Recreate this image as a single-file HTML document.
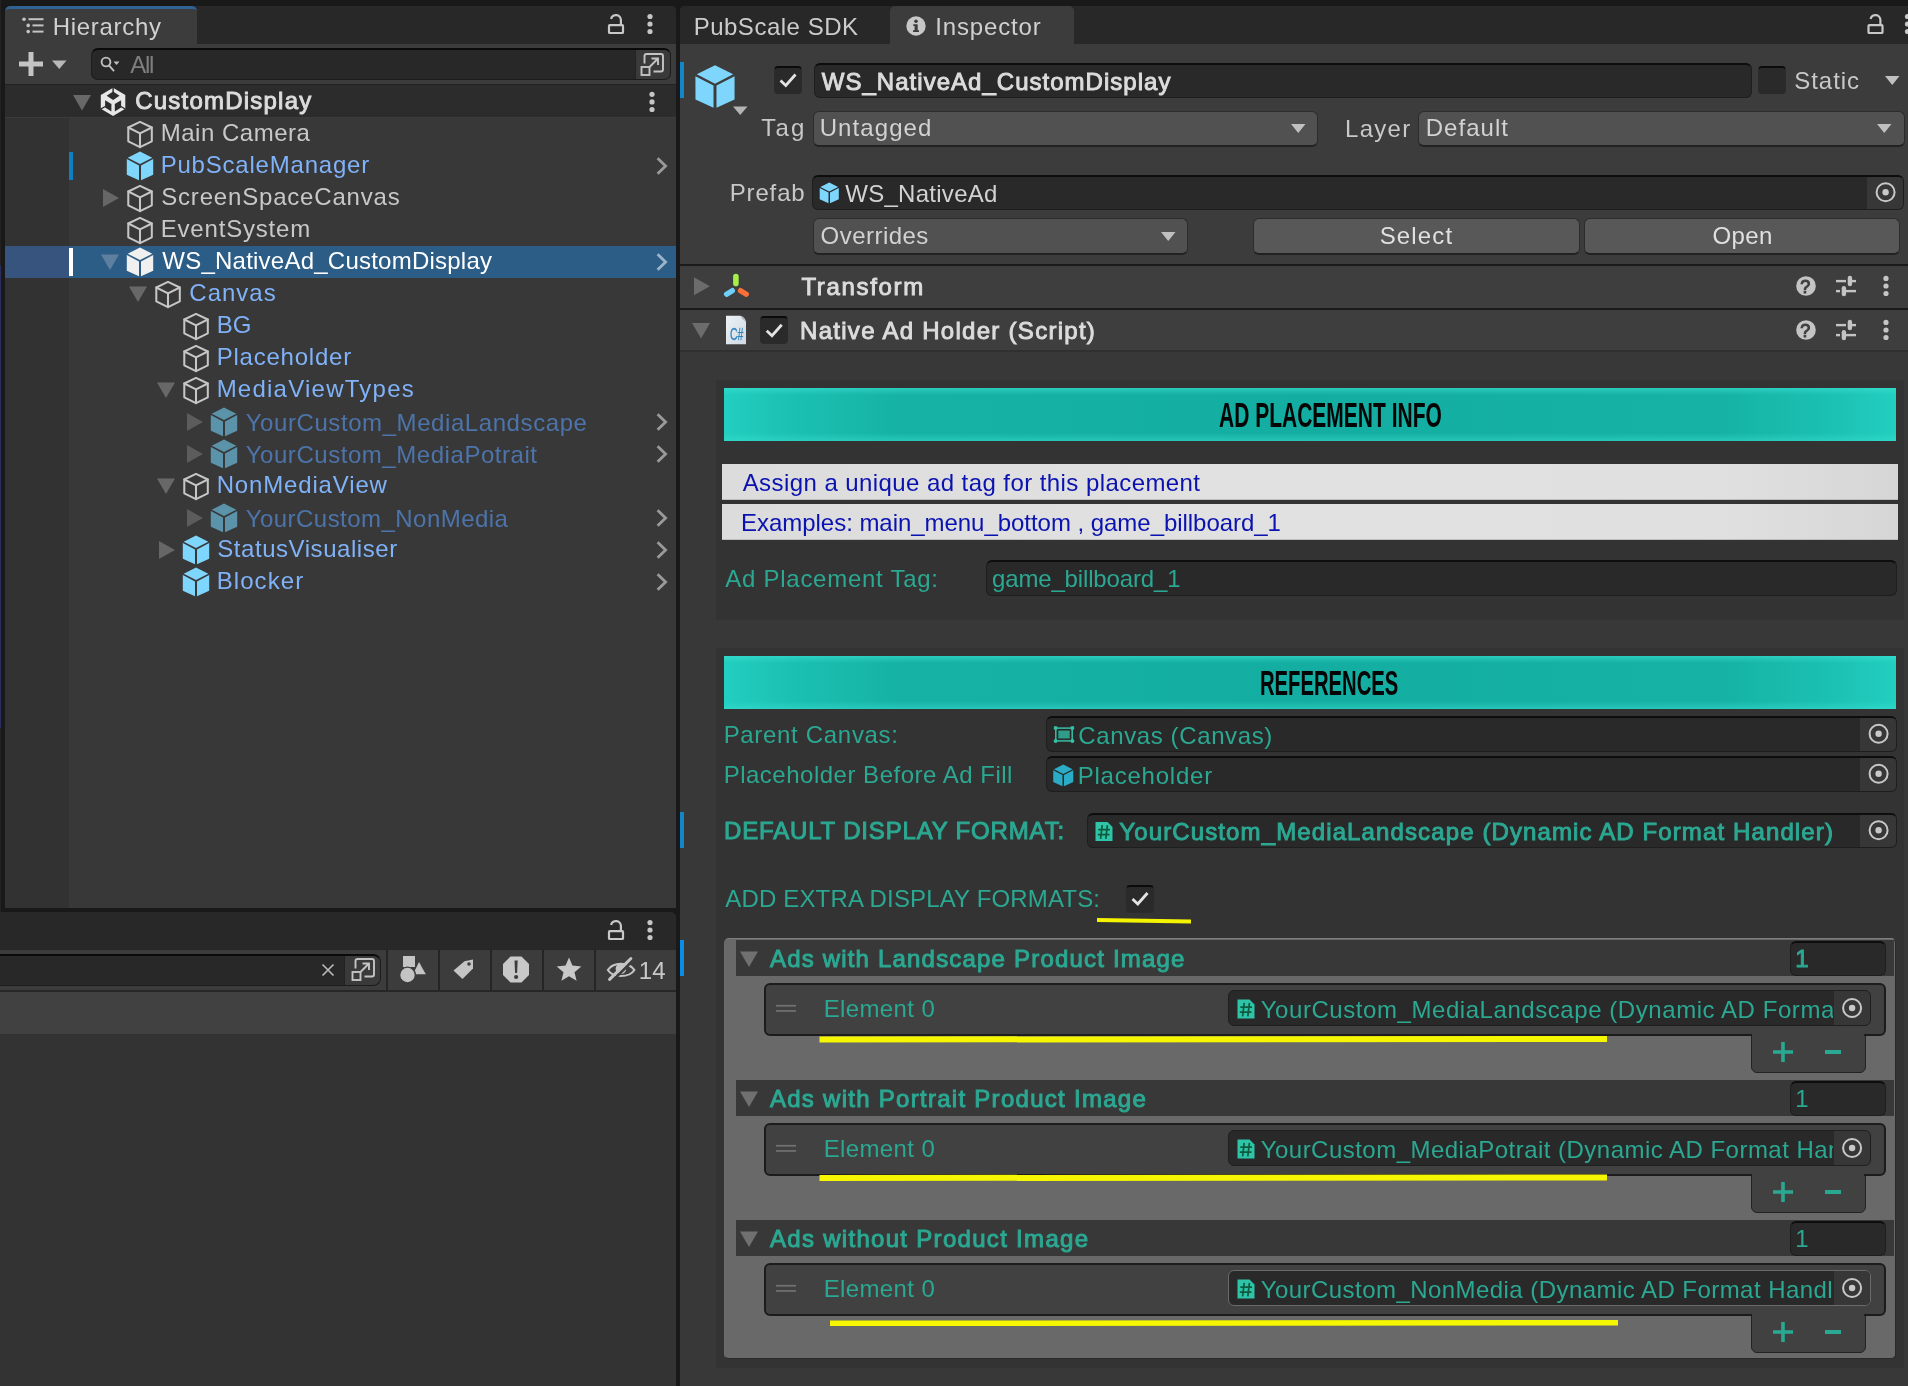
<!DOCTYPE html><html><head><meta charset="utf-8"><title>Unity Inspector</title><style>
html,body{margin:0;padding:0}
body{width:1908px;height:1386px;background:#191919;overflow:hidden;position:relative;font-family:"Liberation Sans",sans-serif}
div,svg,span{position:absolute}
#root{left:0;top:0;width:1908px;height:1386px;will-change:transform}
svg{overflow:visible}
.t{white-space:pre;line-height:1;display:block}
.c{overflow:hidden;white-space:pre}
</style></head><body><div id="root"><div style="left:0px;top:0px;width:1px;height:265px;background:#222222;"></div><div style="left:0px;top:265px;width:1px;height:463px;background:#2d2d5c;"></div><div style="left:0px;top:728px;width:1px;height:658px;background:#222222;"></div><div style="left:5px;top:6px;width:671px;height:902px;background:#383838;border-radius:5px 5px 0 0;overflow:hidden"><div style="left:0;top:0;width:671px;height:38px;background:#282828"></div><div style="left:0;top:0;width:192px;height:38px;background:#3c3c3c;border-top:3px solid #2f6393;border-radius:5px 5px 0 0;box-sizing:border-box"></div><div style="left:0;top:38px;width:671px;height:40px;background:#3c3c3c"></div><div style="left:0;top:78px;width:671px;height:33px;background:#2c2c2c;border-top:1.5px solid #222"></div><div style="left:0;top:110.5px;width:671px;height:1.5px;background:#3b3b3b"></div><div style="left:0;top:112px;width:64px;height:800px;background:#323232"></div><div style="left:0;top:240px;width:64px;height:32px;background:#36547e"></div><div style="left:64px;top:240px;width:607px;height:32px;background:#2c5d87"></div></div><svg style="left:22px;top:17px;" width="23" height="18"><g transform="translate(0.000,0.000)"><g fill="#c4c4c4"><circle cx="2" cy="2.2" r="1.8"/><circle cx="6.2" cy="8.4" r="1.8"/><circle cx="6.2" cy="14.6" r="1.8"/><rect x="6.5" y="1.2" width="15" height="2"/><rect x="10.5" y="7.4" width="11" height="2"/><rect x="10.5" y="13.6" width="11" height="2"/></g></g></svg><span id="t0" class="t" style="left:52.64px;top:15.00px;font-size:24px;color:#d0d0d0;letter-spacing:0.713px;">Hierarchy</span><svg style="left:607px;top:13px;" width="18" height="22"><g transform="translate(0.900,0.900)"><g fill="none" stroke="#c8c8c8" stroke-width="2.2"><rect x="1.1" y="11.2" width="14" height="7.9" rx="0.8"/><path d="M13 11.2 V6.1 A4.95 4.95 0 0 0 3.2 5.1" stroke-linecap="butt"/></g></g></svg><svg style="left:647px;top:13px;" width="7" height="22"><g transform="translate(0.000,0.500)"><circle cx="3" cy="3.00" r="2.6" fill="#c6c6c6"/><circle cx="3" cy="10.50" r="2.6" fill="#c6c6c6"/><circle cx="3" cy="18.00" r="2.6" fill="#c6c6c6"/></g></svg><svg style="left:19px;top:52px;" width="25" height="25"><g transform="translate(0.000,0.000)"><path d="M9.5 0 H14.5 V9.5 H24 V14.5 H14.5 V24 H9.5 V14.5 H0 V9.5 H9.5 Z" fill="#c4c4c4"/></g></svg><svg style="left:52px;top:60px;" width="16" height="10"><g transform="translate(0.000,0.500)"><path d="M0 0 H14.5 L7.25 8.5 Z" fill="#b8b8b8"/></g></svg><div style="left:90.8px;top:48px;width:579.8px;height:32px;background:#282828;border:1.5px solid #1c1c1c;border-top:2px solid #0a0a0a;border-radius:7px;box-sizing:border-box;overflow:hidden"><div style="right:0;top:0;width:34px;height:32px;background:#3a3a3a;border-left:1.5px solid #232323"></div></div><svg style="left:100px;top:56px;" width="21" height="18"><g transform="translate(0.000,0.000)"><g fill="none" stroke="#c0c0c0" stroke-width="1.9"><circle cx="6" cy="6" r="4.4"/><path d="M9 9.3 L14 15.2"/></g><path d="M13.5 5.5 H19.5 L16.5 9 Z" fill="#c0c0c0"/></g></svg><span id="t1" class="t" style="left:130.30px;top:53.00px;font-size:24px;color:#7e7e7e;letter-spacing:-1.264px;">All</span><svg style="left:640px;top:52px;" width="25" height="25"><g transform="translate(0.500,0.500)"><g fill="none" stroke="#c4c4c4" stroke-width="1.9"><path d="M4 11 V3.5 Q4 1.5 6 1.5 H20.5 Q22.5 1.5 22.5 3.5 V17 Q22.5 19 20.5 19 H13"/><rect x="1" y="14.5" width="8" height="8"/><path d="M9 14.5 L17.5 6 M11 6 H17.5 V12.5"/></g></g></svg><svg style="left:73px;top:95px;" width="19" height="17"><g transform="translate(0.000,0.000)"><path d="M0 0 H18 L9.0 15.5 Z" fill="#686868"/></g></svg><svg style="left:100px;top:87px;" width="26" height="30"><g transform="translate(0.800,0.800)"><path d="M12.3 0 L24.5 7.1 V21 L12.3 28.1 L0 21 V7.1 Z" fill="#e8e8e8"/><g fill="#2c2c2c"><path d="M12.3 3.8 L18.7 8 L12.3 12.2 L5.9 8 Z"/><path d="M4.3 12.5 L10.6 16.3 V23.6 L4.3 19.8 Z"/><path d="M14 16.3 L20.3 12.5 V19.8 L14 23.6 Z"/><rect x="11.6" y="0" width="1.4" height="4.5"/><path d="M0 20.5 L4.6 17.9 L5.1 19 L0.6 21.8 Z"/><path d="M24.5 20.5 L20 17.9 L19.5 19 L24 21.8 Z"/></g></g></svg><span id="t2" class="t" style="left:135.16px;top:89.00px;font-size:24px;color:#dcdcdc;-webkit-text-stroke:0.95px #dcdcdc;letter-spacing:1.224px;">CustomDisplay</span><svg style="left:649px;top:91px;" width="7" height="23"><g transform="translate(0.000,0.300)"><circle cx="3" cy="3.00" r="2.6" fill="#c6c6c6"/><circle cx="3" cy="10.60" r="2.6" fill="#c6c6c6"/><circle cx="3" cy="18.20" r="2.6" fill="#c6c6c6"/></g></svg><svg style="left:127px;top:120px;" width="27" height="29"><g transform="translate(0.000,0.500)"><g fill="none" stroke="#c6c6c6" stroke-width="2.05" stroke-linejoin="round" stroke-linecap="round"><path d="M13 1.3 L24.8 7 L24.8 20.8 L13 26.7 L1.3 20.8 L1.3 7 Z"/><path d="M1.3 7 L13 12.8 L24.8 7 M13 12.8 L13 26.7"/></g></g></svg><span id="t3" class="t" style="left:160.64px;top:121.00px;font-size:24px;color:#c8c8c8;letter-spacing:0.527px;">Main Camera</span><svg style="left:126px;top:151px;" width="28" height="30"><g transform="translate(0.500,0.500) scale(1.00000,1.00000) translate(-0.0,-0.0)"><g fill="#7fd6fd"><path d="M13.5 0.1 L25.8 6.3 L13.5 12.6 L1.2 6.3 Z"/><path d="M0.3 7.6 L12.5 13.9 L12.5 28.8 L0.3 23.2 Z"/><path d="M14.5 13.9 L26.7 7.6 L26.7 23.2 L14.5 28.8 Z"/></g></g></svg><span id="t4" class="t" style="left:160.64px;top:153.00px;font-size:24px;color:#80b2f8;letter-spacing:0.794px;">PubScaleManager</span><svg style="left:656px;top:157px;" width="13" height="19"><g transform="translate(0.000,0.000)"><path d="M1.6 1.2 L9.6 9 L1.6 16.8" fill="none" stroke="#9a9a9a" stroke-width="2.8"/></g></svg><svg style="left:103px;top:189px;" width="17" height="19"><g transform="translate(0.000,0.000)"><path d="M0 0 L16 9.0 L0 18 Z" fill="#666666"/></g></svg><svg style="left:127px;top:184px;" width="27" height="29"><g transform="translate(0.000,0.500)"><g fill="none" stroke="#c6c6c6" stroke-width="2.05" stroke-linejoin="round" stroke-linecap="round"><path d="M13 1.3 L24.8 7 L24.8 20.8 L13 26.7 L1.3 20.8 L1.3 7 Z"/><path d="M1.3 7 L13 12.8 L24.8 7 M13 12.8 L13 26.7"/></g></g></svg><span id="t5" class="t" style="left:161.23px;top:185.00px;font-size:24px;color:#c8c8c8;letter-spacing:0.814px;">ScreenSpaceCanvas</span><svg style="left:127px;top:216px;" width="27" height="29"><g transform="translate(0.000,0.500)"><g fill="none" stroke="#c6c6c6" stroke-width="2.05" stroke-linejoin="round" stroke-linecap="round"><path d="M13 1.3 L24.8 7 L24.8 20.8 L13 26.7 L1.3 20.8 L1.3 7 Z"/><path d="M1.3 7 L13 12.8 L24.8 7 M13 12.8 L13 26.7"/></g></g></svg><span id="t6" class="t" style="left:160.64px;top:217.00px;font-size:24px;color:#c8c8c8;letter-spacing:0.827px;">EventSystem</span><svg style="left:101px;top:254px;" width="19" height="17"><g transform="translate(0.000,0.500)"><path d="M0 0 H18 L9.0 15.5 Z" fill="#5e7fa0"/></g></svg><svg style="left:126px;top:247px;" width="28" height="30"><g transform="translate(0.500,0.500) scale(1.00000,1.00000) translate(-0.0,-0.0)"><g fill="#f0f0f0"><path d="M13.5 0.1 L25.8 6.3 L13.5 12.6 L1.2 6.3 Z"/><path d="M0.3 7.6 L12.5 13.9 L12.5 28.8 L0.3 23.2 Z"/><path d="M14.5 13.9 L26.7 7.6 L26.7 23.2 L14.5 28.8 Z"/></g></g></svg><span id="t7" class="t" style="left:162.28px;top:249.00px;font-size:24px;color:#ffffff;letter-spacing:0.235px;">WS_NativeAd_CustomDisplay</span><svg style="left:656px;top:253px;" width="13" height="19"><g transform="translate(0.000,0.000)"><path d="M1.6 1.2 L9.6 9 L1.6 16.8" fill="none" stroke="#9cb4ca" stroke-width="2.8"/></g></svg><svg style="left:129px;top:286px;" width="19" height="17"><g transform="translate(0.000,0.500)"><path d="M0 0 H18 L9.0 15.5 Z" fill="#686868"/></g></svg><svg style="left:155px;top:280px;" width="27" height="29"><g transform="translate(0.000,0.500)"><g fill="none" stroke="#c6c6c6" stroke-width="2.05" stroke-linejoin="round" stroke-linecap="round"><path d="M13 1.3 L24.8 7 L24.8 20.8 L13 26.7 L1.3 20.8 L1.3 7 Z"/><path d="M1.3 7 L13 12.8 L24.8 7 M13 12.8 L13 26.7"/></g></g></svg><span id="t8" class="t" style="left:189.29px;top:281.00px;font-size:24px;color:#80b2f8;letter-spacing:1.013px;">Canvas</span><svg style="left:183px;top:312px;" width="27" height="29"><g transform="translate(0.000,0.500)"><g fill="none" stroke="#c6c6c6" stroke-width="2.05" stroke-linejoin="round" stroke-linecap="round"><path d="M13 1.3 L24.8 7 L24.8 20.8 L13 26.7 L1.3 20.8 L1.3 7 Z"/><path d="M1.3 7 L13 12.8 L24.8 7 M13 12.8 L13 26.7"/></g></g></svg><span id="t9" class="t" style="left:216.64px;top:313.00px;font-size:24px;color:#80b2f8;letter-spacing:0.234px;">BG</span><svg style="left:183px;top:344px;" width="27" height="29"><g transform="translate(0.000,0.500)"><g fill="none" stroke="#c6c6c6" stroke-width="2.05" stroke-linejoin="round" stroke-linecap="round"><path d="M13 1.3 L24.8 7 L24.8 20.8 L13 26.7 L1.3 20.8 L1.3 7 Z"/><path d="M1.3 7 L13 12.8 L24.8 7 M13 12.8 L13 26.7"/></g></g></svg><span id="t10" class="t" style="left:216.64px;top:345.00px;font-size:24px;color:#80b2f8;letter-spacing:0.783px;">Placeholder</span><svg style="left:157px;top:382px;" width="19" height="17"><g transform="translate(0.000,0.500)"><path d="M0 0 H18 L9.0 15.5 Z" fill="#686868"/></g></svg><svg style="left:183px;top:376px;" width="27" height="29"><g transform="translate(0.000,0.500)"><g fill="none" stroke="#c6c6c6" stroke-width="2.05" stroke-linejoin="round" stroke-linecap="round"><path d="M13 1.3 L24.8 7 L24.8 20.8 L13 26.7 L1.3 20.8 L1.3 7 Z"/><path d="M1.3 7 L13 12.8 L24.8 7 M13 12.8 L13 26.7"/></g></g></svg><span id="t11" class="t" style="left:216.64px;top:377.00px;font-size:24px;color:#80b2f8;letter-spacing:1.239px;">MediaViewTypes</span><svg style="left:187px;top:413px;" width="17" height="19"><g transform="translate(0.000,0.000)"><path d="M0 0 L16 9.0 L0 18 Z" fill="#5c5c5c"/></g></svg><svg style="left:210px;top:407px;" width="28" height="30"><g transform="translate(0.500,0.500) scale(1.00000,1.00000) translate(-0.0,-0.0)"><g fill="#5b93ab"><path d="M13.5 0.1 L25.8 6.3 L13.5 12.6 L1.2 6.3 Z"/><path d="M0.3 7.6 L12.5 13.9 L12.5 28.8 L0.3 23.2 Z"/><path d="M14.5 13.9 L26.7 7.6 L26.7 23.2 L14.5 28.8 Z"/></g></g></svg><span id="t12" class="t" style="left:245.71px;top:411.00px;font-size:24px;color:#4d74aa;letter-spacing:0.578px;">YourCustom_MediaLandscape</span><svg style="left:656px;top:413px;" width="13" height="19"><g transform="translate(0.000,0.000)"><path d="M1.6 1.2 L9.6 9 L1.6 16.8" fill="none" stroke="#9a9a9a" stroke-width="2.8"/></g></svg><svg style="left:187px;top:445px;" width="17" height="19"><g transform="translate(0.000,0.000)"><path d="M0 0 L16 9.0 L0 18 Z" fill="#5c5c5c"/></g></svg><svg style="left:210px;top:439px;" width="28" height="30"><g transform="translate(0.500,0.500) scale(1.00000,1.00000) translate(-0.0,-0.0)"><g fill="#5b93ab"><path d="M13.5 0.1 L25.8 6.3 L13.5 12.6 L1.2 6.3 Z"/><path d="M0.3 7.6 L12.5 13.9 L12.5 28.8 L0.3 23.2 Z"/><path d="M14.5 13.9 L26.7 7.6 L26.7 23.2 L14.5 28.8 Z"/></g></g></svg><span id="t13" class="t" style="left:245.71px;top:443.00px;font-size:24px;color:#4d74aa;letter-spacing:0.549px;">YourCustom_MediaPotrait</span><svg style="left:656px;top:445px;" width="13" height="19"><g transform="translate(0.000,0.000)"><path d="M1.6 1.2 L9.6 9 L1.6 16.8" fill="none" stroke="#9a9a9a" stroke-width="2.8"/></g></svg><svg style="left:157px;top:478px;" width="19" height="17"><g transform="translate(0.000,0.500)"><path d="M0 0 H18 L9.0 15.5 Z" fill="#686868"/></g></svg><svg style="left:183px;top:472px;" width="27" height="29"><g transform="translate(0.000,0.500)"><g fill="none" stroke="#c6c6c6" stroke-width="2.05" stroke-linejoin="round" stroke-linecap="round"><path d="M13 1.3 L24.8 7 L24.8 20.8 L13 26.7 L1.3 20.8 L1.3 7 Z"/><path d="M1.3 7 L13 12.8 L24.8 7 M13 12.8 L13 26.7"/></g></g></svg><span id="t14" class="t" style="left:216.64px;top:473.00px;font-size:24px;color:#80b2f8;letter-spacing:0.846px;">NonMediaView</span><svg style="left:187px;top:509px;" width="17" height="19"><g transform="translate(0.000,0.000)"><path d="M0 0 L16 9.0 L0 18 Z" fill="#5c5c5c"/></g></svg><svg style="left:210px;top:503px;" width="28" height="30"><g transform="translate(0.500,0.500) scale(1.00000,1.00000) translate(-0.0,-0.0)"><g fill="#5b93ab"><path d="M13.5 0.1 L25.8 6.3 L13.5 12.6 L1.2 6.3 Z"/><path d="M0.3 7.6 L12.5 13.9 L12.5 28.8 L0.3 23.2 Z"/><path d="M14.5 13.9 L26.7 7.6 L26.7 23.2 L14.5 28.8 Z"/></g></g></svg><span id="t15" class="t" style="left:245.71px;top:507.00px;font-size:24px;color:#4d74aa;letter-spacing:0.462px;">YourCustom_NonMedia</span><svg style="left:656px;top:509px;" width="13" height="19"><g transform="translate(0.000,0.000)"><path d="M1.6 1.2 L9.6 9 L1.6 16.8" fill="none" stroke="#9a9a9a" stroke-width="2.8"/></g></svg><svg style="left:159px;top:541px;" width="17" height="19"><g transform="translate(0.000,0.000)"><path d="M0 0 L16 9.0 L0 18 Z" fill="#666666"/></g></svg><svg style="left:182px;top:535px;" width="28" height="30"><g transform="translate(0.500,0.500) scale(1.00000,1.00000) translate(-0.0,-0.0)"><g fill="#7fd6fd"><path d="M13.5 0.1 L25.8 6.3 L13.5 12.6 L1.2 6.3 Z"/><path d="M0.3 7.6 L12.5 13.9 L12.5 28.8 L0.3 23.2 Z"/><path d="M14.5 13.9 L26.7 7.6 L26.7 23.2 L14.5 28.8 Z"/></g></g></svg><span id="t16" class="t" style="left:217.23px;top:537.00px;font-size:24px;color:#80b2f8;letter-spacing:0.555px;">StatusVisualiser</span><svg style="left:656px;top:541px;" width="13" height="19"><g transform="translate(0.000,0.000)"><path d="M1.6 1.2 L9.6 9 L1.6 16.8" fill="none" stroke="#9a9a9a" stroke-width="2.8"/></g></svg><svg style="left:182px;top:567px;" width="28" height="30"><g transform="translate(0.500,0.500) scale(1.00000,1.00000) translate(-0.0,-0.0)"><g fill="#7fd6fd"><path d="M13.5 0.1 L25.8 6.3 L13.5 12.6 L1.2 6.3 Z"/><path d="M0.3 7.6 L12.5 13.9 L12.5 28.8 L0.3 23.2 Z"/><path d="M14.5 13.9 L26.7 7.6 L26.7 23.2 L14.5 28.8 Z"/></g></g></svg><span id="t17" class="t" style="left:216.64px;top:569.00px;font-size:24px;color:#80b2f8;letter-spacing:1.091px;">Blocker</span><svg style="left:656px;top:573px;" width="13" height="19"><g transform="translate(0.000,0.000)"><path d="M1.6 1.2 L9.6 9 L1.6 16.8" fill="none" stroke="#9a9a9a" stroke-width="2.8"/></g></svg><div style="left:69px;top:152px;width:4px;height:28px;background:#0e7fc0;"></div><div style="left:69px;top:248px;width:4px;height:28px;background:#ffffff;"></div><div style="left:0;top:912px;width:676px;height:474px;background:#333333;border-radius:0 6px 0 0;overflow:hidden"><div style="left:0;top:0;width:676px;height:38px;background:#282828"></div><div style="left:0;top:38px;width:676px;height:41px;background:#3c3c3c"></div><div style="left:0;top:78px;width:676px;height:2px;background:#272727"></div><div style="left:0;top:80px;width:676px;height:42px;background:#414141"></div><div style="left:-20px;top:42px;width:401px;height:32px;background:#282828;border:1.5px solid #1c1c1c;border-top:2px solid #0a0a0a;border-radius:8px;box-sizing:border-box;overflow:hidden"><div style="right:0;top:0;width:35px;height:32px;background:#3a3a3a;border-left:1.5px solid #232323"></div></div><div style="left:386px;top:38px;width:2px;height:40px;background:#252525"></div><div style="left:438px;top:38px;width:2px;height:40px;background:#252525"></div><div style="left:490px;top:38px;width:2px;height:40px;background:#252525"></div><div style="left:542px;top:38px;width:2px;height:40px;background:#252525"></div><div style="left:594px;top:38px;width:2px;height:40px;background:#252525"></div></div><svg style="left:607px;top:919px;" width="18" height="22"><g transform="translate(0.900,0.900)"><g fill="none" stroke="#c8c8c8" stroke-width="2.2"><rect x="1.1" y="11.2" width="14" height="7.9" rx="0.8"/><path d="M13 11.2 V6.1 A4.95 4.95 0 0 0 3.2 5.1" stroke-linecap="butt"/></g></g></svg><svg style="left:647px;top:919px;" width="7" height="22"><g transform="translate(0.000,0.600)"><circle cx="3" cy="3.00" r="2.6" fill="#c6c6c6"/><circle cx="3" cy="10.40" r="2.6" fill="#c6c6c6"/><circle cx="3" cy="17.90" r="2.6" fill="#c6c6c6"/></g></svg><svg style="left:321px;top:963px;" width="15" height="15"><g transform="translate(0.000,0.000)"><path d="M1.5 1.5 L12.5 12.5 M12.5 1.5 L1.5 12.5" stroke="#b8b8b8" stroke-width="1.7" fill="none"/></g></svg><svg style="left:351px;top:957px;" width="25" height="25"><g transform="translate(0.500,0.500)"><g fill="none" stroke="#c4c4c4" stroke-width="1.9"><path d="M4 11 V3.5 Q4 1.5 6 1.5 H20.5 Q22.5 1.5 22.5 3.5 V17 Q22.5 19 20.5 19 H13"/><rect x="1" y="14.5" width="8" height="8"/><path d="M9 14.5 L17.5 6 M11 6 H17.5 V12.5"/></g></g></svg><svg style="left:400px;top:956px;" width="27" height="28"><g transform="translate(0.000,0.000)"><g fill="#c4c4c4"><rect x="3" y="0" width="12" height="11"/><path d="M19 6 L25.8 18.3 H13 Z"/><circle cx="7.5" cy="19" r="7.9" stroke="#3c3c3c" stroke-width="1.4"/></g></g></svg><svg style="left:453px;top:959px;" width="23" height="22"><g transform="translate(0.000,0.000)"><path d="M0.5 11.5 L11.5 2.2 L20 0.5 V9.5 L9.5 20 Z" fill="#c4c4c4"/><circle cx="16" cy="5" r="1.8" fill="#3c3c3c"/></g></svg><svg style="left:502px;top:956px;" width="28" height="28"><g transform="translate(0.500,0.000)"><path d="M8 0.5 H19 L26.5 8 V19 L19 26.5 H8 L0.5 19 V8 Z" fill="#c8c8c8"/><path d="M12 4.5 H15.2 L14.6 17 H12.6 Z" fill="#3c3c3c"/><circle cx="13.6" cy="21" r="2.1" fill="#3c3c3c"/></g></svg><svg style="left:556px;top:957px;" width="27" height="25"><g transform="translate(0.000,0.000)"><path d="M13 0.5 L16.4 8.6 L25.3 9.4 L18.5 15.2 L20.6 23.8 L13 19.2 L5.4 23.8 L7.5 15.2 L0.7 9.4 L9.6 8.6 Z" fill="#c8c8c8"/></g></svg><svg style="left:606px;top:957px;" width="30" height="24"><g transform="translate(0.700,0.600)"><path d="M1.2 12.4 C6 4.3 22.6 4.3 27.7 12.4 C22.6 20.4 6 20.4 1.2 12.4 Z" fill="none" stroke="#c4c4c4" stroke-width="2.1"/><circle cx="14.2" cy="11.2" r="5.3" fill="#c4c4c4"/><path d="M5.2 23.6 L27 2.1" stroke="#3c3c3c" stroke-width="2.6" fill="none"/><path d="M2.9 21.8 L24.2 0.9" stroke="#c4c4c4" stroke-width="3" stroke-linecap="round" fill="none"/></g></svg><span id="t18" class="t" style="left:638.78px;top:959.00px;font-size:24px;color:#c8c8c8;letter-spacing:0.053px;">14</span><div style="left:680px;top:6px;width:1228px;height:1380px;background:#383838;border-radius:5px 0 0 0;overflow:hidden"><div style="left:0;top:0;width:1228px;height:38px;background:#282828"></div><div style="left:210px;top:0;width:184px;height:38px;background:#3c3c3c;border-radius:5px 5px 0 0"></div><div style="left:0;top:38px;width:1228px;height:220px;background:#3c3c3c"></div><div style="left:0;top:258px;width:1228px;height:2px;background:#1a1a1a"></div><div style="left:0;top:260px;width:1228px;height:42px;background:#3e3e3e"></div><div style="left:0;top:302px;width:1228px;height:2px;background:#1a1a1a"></div><div style="left:0;top:304px;width:1228px;height:40px;background:#3e3e3e"></div><div style="left:0;top:344px;width:1228px;height:1.5px;background:#303030"></div><div style="left:36px;top:374px;width:1188px;height:240px;background:#333333"></div><div style="left:36px;top:642px;width:1188px;height:720px;background:#333333"></div></div><span id="t19" class="t" style="left:693.64px;top:15.00px;font-size:24px;color:#cccccc;letter-spacing:0.515px;">PubScale SDK</span><svg style="left:906px;top:16px;" width="21" height="21"><g transform="translate(0.000,0.000)"><circle cx="10" cy="10" r="9.7" fill="#c8c8c8"/><circle cx="10" cy="5.2" r="1.8" fill="#3c3c3c"/><path d="M7.3 8.3 H11.7 V14.3 H13 V16 H7 V14.3 H8.6 V10 H7.3 Z" fill="#3c3c3c"/></g></svg><span id="t20" class="t" style="left:935.37px;top:15.00px;font-size:24px;color:#d0d0d0;letter-spacing:0.823px;">Inspector</span><svg style="left:1867px;top:13px;" width="18" height="22"><g transform="translate(0.400,0.900)"><g fill="none" stroke="#c8c8c8" stroke-width="2.2"><rect x="1.1" y="11.2" width="14" height="7.9" rx="0.8"/><path d="M13 11.2 V6.1 A4.95 4.95 0 0 0 3.2 5.1" stroke-linecap="butt"/></g></g></svg><svg style="left:1904px;top:13px;" width="7" height="22"><g transform="translate(0.500,0.500)"><circle cx="3" cy="3.00" r="2.6" fill="#c6c6c6"/><circle cx="3" cy="10.50" r="2.6" fill="#c6c6c6"/><circle cx="3" cy="18.00" r="2.6" fill="#c6c6c6"/></g></svg><div style="left:680px;top:62px;width:4px;height:36px;background:#1286c8;"></div><svg style="left:695px;top:65px;" width="41" height="44"><g transform="translate(0.000,0.000) scale(1.48148,1.48276) translate(-0.0,-0.0)"><g fill="#7fd6fd"><path d="M13.5 0.1 L25.8 6.3 L13.5 12.6 L1.2 6.3 Z"/><path d="M0.3 7.6 L12.5 13.9 L12.5 28.8 L0.3 23.2 Z"/><path d="M14.5 13.9 L26.7 7.6 L26.7 23.2 L14.5 28.8 Z"/></g></g></svg><svg style="left:733px;top:106px;" width="16" height="10"><g transform="translate(0.000,0.500)"><path d="M0 0 H14.5 L7.25 8.5 Z" fill="#b4b4b4"/></g></svg><div style="left:774px;top:66px;width:28px;height:28px;background:#2a2a2a;border:1.5px solid #2b2b2b;border-top:2px solid #0b0b0b;border-radius:4px;box-sizing:border-box"></div><svg style="left:774px;top:66px;" width="29" height="29"><g transform="translate(0.000,0.000)"><path d="M6.5 14.5 L11.8 19.5 L21.5 8.5" fill="none" stroke="#e4e4e4" stroke-width="2.8"/></g></svg><div style="left:814px;top:63px;width:938px;height:34.5px;background:#292929;border:1.5px solid #1e1e1e;border-top:2px solid #0d0d0d;border-radius:6px;box-sizing:border-box;overflow:hidden"></div><span id="t21" class="t" style="left:821.81px;top:70.00px;font-size:24px;color:#dcdcdc;-webkit-text-stroke:0.95px #dcdcdc;letter-spacing:1.021px;">WS_NativeAd_CustomDisplay</span><div style="left:1758px;top:66px;width:28px;height:28px;background:#2a2a2a;border:1.5px solid #2b2b2b;border-top:2px solid #0b0b0b;border-radius:4px;box-sizing:border-box"></div><span id="t22" class="t" style="left:1794.23px;top:69.00px;font-size:24px;color:#c8c8c8;letter-spacing:0.961px;">Static</span><svg style="left:1885px;top:76px;" width="16" height="10"><g transform="translate(0.000,0.000)"><path d="M0 0 H14.5 L7.25 9 Z" fill="#c0c0c0"/></g></svg><span id="t23" class="t" style="left:761.13px;top:116.00px;font-size:24px;color:#c8c8c8;letter-spacing:2.290px;">Tag</span><div style="left:812.7px;top:110.6px;width:505.6px;height:36.5px;background:#515151;border:1.5px solid #2c2c2c;border-bottom:2px solid #222;border-radius:6px;box-sizing:border-box"></div><span id="t24" class="t" style="left:819.71px;top:116.00px;font-size:24px;color:#d2d2d2;letter-spacing:1.087px;">Untagged</span><svg style="left:1291px;top:124px;" width="16" height="10"><g transform="translate(0.000,0.000)"><path d="M0 0 H14.5 L7.25 9 Z" fill="#c0c0c0"/></g></svg><span id="t25" class="t" style="left:1345.08px;top:117.00px;font-size:24px;color:#c8c8c8;letter-spacing:1.272px;">Layer</span><div style="left:1417.7px;top:110.6px;width:487.1px;height:36.5px;background:#515151;border:1.5px solid #2c2c2c;border-bottom:2px solid #222;border-radius:6px;box-sizing:border-box"></div><span id="t26" class="t" style="left:1425.64px;top:116.00px;font-size:24px;color:#d2d2d2;letter-spacing:1.062px;">Default</span><svg style="left:1877px;top:124px;" width="16" height="10"><g transform="translate(0.000,0.000)"><path d="M0 0 H14.5 L7.25 9 Z" fill="#c0c0c0"/></g></svg><span id="t27" class="t" style="left:729.64px;top:181.00px;font-size:24px;color:#c8c8c8;letter-spacing:0.875px;">Prefab</span><div style="left:812px;top:175px;width:1092px;height:34.5px;background:#292929;border:1.5px solid #1e1e1e;border-top:2px solid #0d0d0d;border-radius:6px;box-sizing:border-box;overflow:hidden"><div style="right:0;top:0;width:36px;height:34.5px;background:#373737"></div></div><svg style="left:1874px;top:181px;" width="23" height="23"><g transform="translate(0.600,0.250)"><circle cx="11" cy="11" r="9" fill="none" stroke="#c8c8c8" stroke-width="2"/><circle cx="11" cy="11" r="3.2" fill="#c8c8c8"/></g></svg><svg style="left:819px;top:182px;" width="21" height="22"><g transform="translate(0.500,0.500) scale(0.72222,0.72414) translate(-0.0,-0.0)"><g fill="#7fd6fd"><path d="M13.5 0.1 L25.8 6.3 L13.5 12.6 L1.2 6.3 Z"/><path d="M0.3 7.6 L12.5 13.9 L12.5 28.8 L0.3 23.2 Z"/><path d="M14.5 13.9 L26.7 7.6 L26.7 23.2 L14.5 28.8 Z"/></g></g></svg><span id="t28" class="t" style="left:845.28px;top:182.00px;font-size:24px;color:#d2d2d2;letter-spacing:0.274px;">WS_NativeAd</span><div style="left:812.7px;top:218.1px;width:375.6px;height:36.5px;background:#515151;border:1.5px solid #2c2c2c;border-bottom:2px solid #222;border-radius:6px;box-sizing:border-box"></div><span id="t29" class="t" style="left:820.53px;top:224.00px;font-size:24px;color:#d2d2d2;letter-spacing:0.472px;">Overrides</span><svg style="left:1161px;top:232px;" width="16" height="10"><g transform="translate(0.000,0.000)"><path d="M0 0 H14.5 L7.25 9 Z" fill="#c0c0c0"/></g></svg><div style="left:1252.7px;top:218.1px;width:327.1px;height:36.5px;background:#585858;border:1.5px solid #2c2c2c;border-bottom:2px solid #222;border-radius:6px;box-sizing:border-box"></div><span id="t30" class="t" style="left:1379.74px;top:224.00px;font-size:24px;color:#e0e0e0;letter-spacing:1.124px;">Select</span><div style="left:1583.7px;top:218.1px;width:316.1px;height:36.5px;background:#585858;border:1.5px solid #2c2c2c;border-bottom:2px solid #222;border-radius:6px;box-sizing:border-box"></div><span id="t31" class="t" style="left:1712.53px;top:224.00px;font-size:24px;color:#e0e0e0;letter-spacing:0.376px;">Open</span><svg style="left:694px;top:277px;" width="17" height="19"><g transform="translate(0.000,0.200)"><path d="M0 0 L15.8 9.0 L0 18 Z" fill="#6c6c6c"/></g></svg><svg style="left:723px;top:273px;" width="29" height="29"><g transform="translate(0.000,0.000)"><g stroke-linecap="round" fill="none"><path d="M12.9 3.6 V10.4" stroke="#a4ef48" stroke-width="5.6"/><path d="M9.3 17.7 L3.6 21.2" stroke="#6fcffa" stroke-width="5.4"/><path d="M17.6 17.7 L23.3 21.2" stroke="#fa7037" stroke-width="5.4"/></g></g></svg><span id="t32" class="t" style="left:801.39px;top:275.00px;font-size:24px;color:#dcdcdc;-webkit-text-stroke:0.95px #dcdcdc;letter-spacing:1.682px;">Transform</span><svg style="left:1796px;top:276px;" width="21" height="21"><g transform="translate(0.000,0.000)"><circle cx="10" cy="10" r="9.8" fill="#c4c4c4"/></g></svg><span id="t33" class="t" style="left:1800.20px;top:278.00px;font-size:18px;color:#3e3e3e;-webkit-text-stroke:0.95px #3e3e3e;">?</span><svg style="left:1836px;top:276px;" width="21" height="21"><g transform="translate(0.000,0.000)"><g fill="#c4c4c4"><rect x="0" y="3.9" width="10" height="2.4"/><rect x="14" y="3.9" width="6" height="2.4"/><rect x="11.7" y="-0.2" width="4.4" height="10.4" rx="2.2"/><rect x="0" y="13.9" width="4" height="2.4"/><rect x="8" y="13.9" width="12" height="2.4"/><rect x="5.7" y="10" width="4.4" height="10.2" rx="2.2"/></g></g></svg><svg style="left:1883px;top:275px;" width="7" height="23"><g transform="translate(0.000,0.400)"><circle cx="3" cy="3.00" r="2.6" fill="#c6c6c6"/><circle cx="3" cy="10.60" r="2.6" fill="#c6c6c6"/><circle cx="3" cy="18.10" r="2.6" fill="#c6c6c6"/></g></svg><svg style="left:692px;top:323px;" width="19" height="17"><g transform="translate(0.000,0.000)"><path d="M0 0 H18 L9.0 15.5 Z" fill="#6c6c6c"/></g></svg><svg style="left:725px;top:315px;" width="22" height="30"><g transform="translate(0.700,0.500)"><defs><linearGradient id="pg" x1="0" y1="0" x2="1" y2="1"><stop offset="0" stop-color="#eef2f5"/><stop offset="1" stop-color="#cfd9e1"/></linearGradient></defs><path d="M0.3 0.3 H14.5 Q19 1 20.3 6.5 V28.7 H0.3 Z" fill="url(#pg)"/><path d="M14.5 0.3 Q16.5 4.5 20.3 6.5 Q18.5 1.5 14.5 0.3 Z" fill="#aeb9c2"/><text x="4.2" y="24" font-family="Liberation Sans,sans-serif" font-size="17" fill="#2f84bd" stroke="#2f84bd" stroke-width="0.35" textLength="13.4" lengthAdjust="spacingAndGlyphs">C#</text></g></svg><div style="left:760.2px;top:316.2px;width:28px;height:28px;background:#2a2a2a;border:1.5px solid #2b2b2b;border-top:2px solid #0b0b0b;border-radius:4px;box-sizing:border-box"></div><svg style="left:760px;top:316px;" width="29" height="29"><g transform="translate(0.200,0.200)"><path d="M6.5 14.5 L11.8 19.5 L21.5 8.5" fill="none" stroke="#e4e4e4" stroke-width="2.8"/></g></svg><span id="t34" class="t" style="left:800.07px;top:319.00px;font-size:24px;color:#dcdcdc;-webkit-text-stroke:0.95px #dcdcdc;letter-spacing:1.279px;">Native Ad Holder (Script)</span><svg style="left:1796px;top:320px;" width="21" height="21"><g transform="translate(0.000,0.000)"><circle cx="10" cy="10" r="9.8" fill="#c4c4c4"/></g></svg><span id="t35" class="t" style="left:1800.20px;top:322.00px;font-size:18px;color:#3e3e3e;-webkit-text-stroke:0.95px #3e3e3e;">?</span><svg style="left:1836px;top:320px;" width="21" height="21"><g transform="translate(0.000,0.000)"><g fill="#c4c4c4"><rect x="0" y="3.9" width="10" height="2.4"/><rect x="14" y="3.9" width="6" height="2.4"/><rect x="11.7" y="-0.2" width="4.4" height="10.4" rx="2.2"/><rect x="0" y="13.9" width="4" height="2.4"/><rect x="8" y="13.9" width="12" height="2.4"/><rect x="5.7" y="10" width="4.4" height="10.2" rx="2.2"/></g></g></svg><svg style="left:1883px;top:319px;" width="7" height="23"><g transform="translate(0.000,0.400)"><circle cx="3" cy="3.00" r="2.6" fill="#c6c6c6"/><circle cx="3" cy="10.60" r="2.6" fill="#c6c6c6"/><circle cx="3" cy="18.10" r="2.6" fill="#c6c6c6"/></g></svg><div style="left:724px;top:388px;width:1172px;height:53px;background:linear-gradient(180deg,rgba(60,225,210,.55) 0,rgba(60,225,210,0) 7px,rgba(60,225,210,0) 45px,rgba(60,225,210,.45) 53px),linear-gradient(90deg,#22cfc0 0,#1bc0b2 6%,#15b2a5 15%,#13aea1 50%,#15b2a5 85%,#1bc0b2 94%,#22cfc0 100%);"></div><div style="left:724px;top:656px;width:1172px;height:53px;background:linear-gradient(180deg,rgba(60,225,210,.55) 0,rgba(60,225,210,0) 7px,rgba(60,225,210,0) 45px,rgba(60,225,210,.45) 53px),linear-gradient(90deg,#22cfc0 0,#1bc0b2 6%,#15b2a5 15%,#13aea1 50%,#15b2a5 85%,#1bc0b2 94%,#22cfc0 100%);"></div><span id="t36" class="t" style="left:1219.13px;top:397.00px;font-size:35px;color:#050505;font-weight:700;transform-origin:0 50%;transform:scaleX(0.6000);">AD PLACEMENT INFO</span><span id="t37" class="t" style="left:1260.02px;top:665.00px;font-size:35px;color:#050505;font-weight:700;transform-origin:0 50%;transform:scaleX(0.5779);">REFERENCES</span><div style="left:722px;top:464px;width:1176px;height:36px;background:linear-gradient(90deg,#dcdcdc 0,#e1e1e1 40%,#e0e0e0 85%,#d6d6d6 100%);border-bottom:1.5px solid #bdbdbd;box-sizing:border-box;"></div><div style="left:722px;top:504px;width:1176px;height:36px;background:linear-gradient(90deg,#dcdcdc 0,#e1e1e1 40%,#e0e0e0 85%,#d6d6d6 100%);border-bottom:1.5px solid #bdbdbd;box-sizing:border-box;"></div><span id="t38" class="t" style="left:742.70px;top:471.00px;font-size:24px;color:#0a12b0;letter-spacing:0.427px;">Assign a unique ad tag for this placement</span><span id="t39" class="t" style="left:741.08px;top:511.00px;font-size:24px;color:#0a12b0;letter-spacing:-0.040px;">Examples: main_menu_bottom , game_billboard_1</span><span id="t40" class="t" style="left:725.30px;top:567.00px;font-size:24px;color:#2ba892;letter-spacing:0.729px;">Ad Placement Tag:</span><div style="left:986px;top:560px;width:911px;height:35.5px;background:#292929;border:1.5px solid #1e1e1e;border-top:2px solid #0d0d0d;border-radius:6px;box-sizing:border-box;overflow:hidden"></div><span id="t41" class="t" style="left:992.01px;top:567.00px;font-size:24px;color:#2ba892;letter-spacing:-0.154px;">game_billboard_1</span><span id="t42" class="t" style="left:723.64px;top:723.00px;font-size:24px;color:#2ba892;letter-spacing:0.686px;">Parent Canvas:</span><div style="left:1046px;top:716px;width:851px;height:35.5px;background:#292929;border:1.5px solid #1e1e1e;border-top:2px solid #0d0d0d;border-radius:6px;box-sizing:border-box;overflow:hidden"><div style="right:0;top:0;width:36px;height:35.5px;background:#373737"></div></div><svg style="left:1867px;top:722px;" width="23" height="23"><g transform="translate(0.600,0.750)"><circle cx="11" cy="11" r="9" fill="none" stroke="#c8c8c8" stroke-width="2"/><circle cx="11" cy="11" r="3.2" fill="#c8c8c8"/></g></svg><svg style="left:1053px;top:725px;" width="23" height="19"><g transform="translate(0.000,0.500)"><rect x="2.8" y="2.6" width="16.4" height="12.8" fill="none" stroke="#35bfa6" stroke-width="1.5"/><rect x="5.3" y="5" width="11.4" height="8" fill="#2e9c88"/><g fill="#35bfa6"><circle cx="2.6" cy="2.4" r="2"/><circle cx="19.4" cy="2.4" r="2"/><circle cx="2.6" cy="15.6" r="2"/><circle cx="19.4" cy="15.6" r="2"/></g></g></svg><span id="t43" class="t" style="left:1078.29px;top:724.00px;font-size:24px;color:#2ba892;letter-spacing:0.614px;">Canvas (Canvas)</span><span id="t44" class="t" style="left:723.64px;top:763.00px;font-size:24px;color:#2ba892;letter-spacing:0.506px;">Placeholder Before Ad Fill</span><div style="left:1046px;top:756px;width:851px;height:35.5px;background:#292929;border:1.5px solid #1e1e1e;border-top:2px solid #0d0d0d;border-radius:6px;box-sizing:border-box;overflow:hidden"><div style="right:0;top:0;width:36px;height:35.5px;background:#373737"></div></div><svg style="left:1867px;top:762px;" width="23" height="23"><g transform="translate(0.600,0.750)"><circle cx="11" cy="11" r="9" fill="none" stroke="#c8c8c8" stroke-width="2"/><circle cx="11" cy="11" r="3.2" fill="#c8c8c8"/></g></svg><svg style="left:1053px;top:764px;" width="22" height="23"><g transform="translate(0.000,0.500) scale(0.75926,0.75862) translate(-0.0,-0.0)"><g fill="#2aacc6"><path d="M13.5 0.1 L25.8 6.3 L13.5 12.6 L1.2 6.3 Z"/><path d="M0.3 7.6 L12.5 13.9 L12.5 28.8 L0.3 23.2 Z"/><path d="M14.5 13.9 L26.7 7.6 L26.7 23.2 L14.5 28.8 Z"/></g></g></svg><span id="t45" class="t" style="left:1077.64px;top:764.00px;font-size:24px;color:#2ba892;letter-spacing:0.783px;">Placeholder</span><div style="left:680px;top:812px;width:4px;height:36px;background:#1286c8;"></div><span id="t46" class="t" style="left:724.07px;top:819.00px;font-size:24px;color:#2ba892;-webkit-text-stroke:0.95px #2ba892;letter-spacing:0.828px;">DEFAULT DISPLAY FORMAT:</span><div style="left:1087px;top:812.5px;width:810px;height:35.5px;background:#292929;border:1.5px solid #1e1e1e;border-top:2px solid #0d0d0d;border-radius:6px;box-sizing:border-box;overflow:hidden"><div style="right:0;top:0;width:36px;height:35.5px;background:#373737"></div></div><svg style="left:1867px;top:819px;" width="23" height="23"><g transform="translate(0.600,0.250)"><circle cx="11" cy="11" r="9" fill="none" stroke="#c8c8c8" stroke-width="2"/><circle cx="11" cy="11" r="3.2" fill="#c8c8c8"/></g></svg><svg style="left:1095px;top:821px;" width="19" height="22"><g transform="translate(0.000,0.000)"><path d="M0.5 1 H12.5 L17.5 6 V20 H0.5 Z" fill="#2ec4a8"/><g stroke="#0f5a3c" stroke-width="1.7" fill="none"><path d="M7.2 4.2 L5.6 17.8 M12.4 4.2 L10.8 17.8 M3.3 8.6 H15 M2.8 13.6 H14.5"/></g></g></svg><span id="t47" class="t" style="left:1119.33px;top:820.00px;font-size:24px;color:#2ba892;-webkit-text-stroke:0.95px #2ba892;letter-spacing:1.118px;">YourCustom_MediaLandscape (Dynamic AD Format Handler)</span><span id="t48" class="t" style="left:725.30px;top:887.00px;font-size:24px;color:#2ba892;letter-spacing:0.157px;">ADD EXTRA DISPLAY FORMATS:</span><div style="left:1126px;top:884.5px;width:28px;height:28px;background:#2a2a2a;border:1.5px solid #2b2b2b;border-top:2px solid #0b0b0b;border-radius:4px;box-sizing:border-box"></div><svg style="left:1126px;top:884px;" width="29" height="29"><g transform="translate(0.000,0.500)"><path d="M6.5 14.5 L11.8 19.5 L21.5 8.5" fill="none" stroke="#e4e4e4" stroke-width="2.8"/></g></svg><svg style="left:1096px;top:916px;" width="98" height="10"><g transform="translate(0.000,0.000)"><path d="M1 2 L95 3.5 L95 7.5 L1 6 Z" fill="#f4f400"/></g></svg><div style="left:724px;top:938px;width:1172px;height:421px;background:#696969;border:1.5px solid #2a2a2a;border-top-color:#7e7e7e;border-left-color:#6c6c6c;border-radius:5px;box-sizing:border-box"></div><div style="left:680px;top:940px;width:4px;height:36px;background:#0a8de6;"></div><div style="left:736px;top:940px;width:1158px;height:36px;background:#383838;"></div><svg style="left:740px;top:951px;" width="19" height="17"><g transform="translate(0.000,0.500)"><path d="M0 0 H18 L9.0 15.5 Z" fill="#707070"/></g></svg><span id="t49" class="t" style="left:769.95px;top:947.00px;font-size:24px;color:#2ba892;-webkit-text-stroke:0.95px #2ba892;letter-spacing:1.189px;">Ads with Landscape Product Image</span><div style="left:1790px;top:940.5px;width:95.5px;height:35px;background:#292929;border:1.5px solid #1e1e1e;border-top:2px solid #0d0d0d;border-radius:6px;box-sizing:border-box;overflow:hidden"></div><span id="t50" class="t" style="left:1795.20px;top:947.00px;font-size:24px;color:#2ba892;-webkit-text-stroke:0.95px #2ba892;">1</span><div style="left:1750.5px;top:1030px;width:115px;height:43px;background:#414141;border:1.5px solid #232323;border-radius:0 0 6px 6px;box-sizing:border-box"></div><div style="left:764px;top:982.5px;width:1122px;height:53px;background:#414141;border:2px solid #1c1c1c;border-radius:6px;box-sizing:border-box"></div><div style="left:1752px;top:1033px;width:112px;height:3px;background:#414141;"></div><svg style="left:776px;top:1004px;" width="21" height="9"><g transform="translate(0.000,0.000)"><rect x="0" y="0.9" width="20" height="1.7" fill="#727272"/><rect x="0" y="6.1" width="20" height="1.7" fill="#727272"/></g></svg><span id="t51" class="t" style="left:823.64px;top:997.00px;font-size:24px;color:#2ba892;letter-spacing:0.390px;">Element 0</span><div style="left:1228px;top:990px;width:642.5px;height:36px;background:#292929;border:1.5px solid #1f1f1f;border-top:1.5px solid #1f1f1f;border-radius:6px;box-sizing:border-box;overflow:hidden"><div style="right:0;top:0;width:36px;height:36px;background:#373737"></div></div><svg style="left:1841px;top:997px;" width="23" height="23"><g transform="translate(0.100,0.000)"><circle cx="11" cy="11" r="9" fill="none" stroke="#c8c8c8" stroke-width="2"/><circle cx="11" cy="11" r="3.2" fill="#c8c8c8"/></g></svg><svg style="left:1237px;top:998px;" width="19" height="22"><g transform="translate(0.000,0.600)"><path d="M0.5 1 H12.5 L17.5 6 V20 H0.5 Z" fill="#2ec4a8"/><g stroke="#0f5a3c" stroke-width="1.7" fill="none"><path d="M7.2 4.2 L5.6 17.8 M12.4 4.2 L10.8 17.8 M3.3 8.6 H15 M2.8 13.6 H14.5"/></g></g></svg><div class="c" style="left:1261px;top:994.00px;width:572px;height:34px"><span id="t52" class="t" style="left:-0.29px;top:4px;font-size:24px;color:#2ba892;letter-spacing:0.561px;">YourCustom_MediaLandscape (Dynamic AD Format Handler)</span></div><svg style="left:1773px;top:1042px;" width="21" height="21"><g transform="translate(0.000,0.000)"><path d="M8.2 0 H11.8 V8.2 H20 V11.8 H11.8 V20 H8.2 V11.8 H0 V8.2 H8.2 Z" fill="#2ba892"/></g></svg><div style="left:1825px;top:1050.2px;width:16px;height:3.6px;background:#2ba892;"></div><svg style="left:819px;top:1035px;" width="789" height="9"><g transform="translate(0.500,0.000)"><path d="M0 1.5 L787.5 1 V7 L0 7.5 Z" fill="#f6f600"/></g></svg><div style="left:736px;top:1080px;width:1158px;height:36px;background:#383838;"></div><svg style="left:740px;top:1091px;" width="19" height="17"><g transform="translate(0.000,0.500)"><path d="M0 0 H18 L9.0 15.5 Z" fill="#707070"/></g></svg><span id="t53" class="t" style="left:769.95px;top:1087.00px;font-size:24px;color:#2ba892;-webkit-text-stroke:0.95px #2ba892;letter-spacing:1.278px;">Ads with Portrait Product Image</span><div style="left:1790px;top:1080.5px;width:95.5px;height:35px;background:#292929;border:1.5px solid #1e1e1e;border-top:2px solid #0d0d0d;border-radius:6px;box-sizing:border-box;overflow:hidden"></div><span id="t54" class="t" style="left:1795.20px;top:1087.00px;font-size:24px;color:#2ba892;">1</span><div style="left:1750.5px;top:1170px;width:115px;height:43px;background:#414141;border:1.5px solid #232323;border-radius:0 0 6px 6px;box-sizing:border-box"></div><div style="left:764px;top:1122.5px;width:1122px;height:53px;background:#414141;border:2px solid #1c1c1c;border-radius:6px;box-sizing:border-box"></div><div style="left:1752px;top:1173px;width:112px;height:3px;background:#414141;"></div><svg style="left:776px;top:1144px;" width="21" height="9"><g transform="translate(0.000,0.000)"><rect x="0" y="0.9" width="20" height="1.7" fill="#727272"/><rect x="0" y="6.1" width="20" height="1.7" fill="#727272"/></g></svg><span id="t55" class="t" style="left:823.64px;top:1137.00px;font-size:24px;color:#2ba892;letter-spacing:0.390px;">Element 0</span><div style="left:1228px;top:1130px;width:642.5px;height:36px;background:#292929;border:1.5px solid #1f1f1f;border-top:1.5px solid #1f1f1f;border-radius:6px;box-sizing:border-box;overflow:hidden"><div style="right:0;top:0;width:36px;height:36px;background:#373737"></div></div><svg style="left:1841px;top:1137px;" width="23" height="23"><g transform="translate(0.100,0.000)"><circle cx="11" cy="11" r="9" fill="none" stroke="#c8c8c8" stroke-width="2"/><circle cx="11" cy="11" r="3.2" fill="#c8c8c8"/></g></svg><svg style="left:1237px;top:1138px;" width="19" height="22"><g transform="translate(0.000,0.600)"><path d="M0.5 1 H12.5 L17.5 6 V20 H0.5 Z" fill="#2ec4a8"/><g stroke="#0f5a3c" stroke-width="1.7" fill="none"><path d="M7.2 4.2 L5.6 17.8 M12.4 4.2 L10.8 17.8 M3.3 8.6 H15 M2.8 13.6 H14.5"/></g></g></svg><div class="c" style="left:1261px;top:1134.00px;width:572px;height:34px"><span id="t56" class="t" style="left:-0.29px;top:4px;font-size:24px;color:#2ba892;letter-spacing:0.476px;">YourCustom_MediaPotrait (Dynamic AD Format Handler)</span></div><svg style="left:1773px;top:1182px;" width="21" height="21"><g transform="translate(0.000,0.000)"><path d="M8.2 0 H11.8 V8.2 H20 V11.8 H11.8 V20 H8.2 V11.8 H0 V8.2 H8.2 Z" fill="#2ba892"/></g></svg><div style="left:1825px;top:1190.2px;width:16px;height:3.6px;background:#2ba892;"></div><svg style="left:819px;top:1173px;" width="789" height="9"><g transform="translate(0.500,0.500)"><path d="M0 1.5 L787.5 1 V7.0 L0 7.5 Z" fill="#f6f600"/></g></svg><div style="left:736px;top:1220px;width:1158px;height:36px;background:#383838;"></div><svg style="left:740px;top:1231px;" width="19" height="17"><g transform="translate(0.000,0.500)"><path d="M0 0 H18 L9.0 15.5 Z" fill="#707070"/></g></svg><span id="t57" class="t" style="left:769.95px;top:1227.00px;font-size:24px;color:#2ba892;-webkit-text-stroke:0.95px #2ba892;letter-spacing:1.303px;">Ads without Product Image</span><div style="left:1790px;top:1220.5px;width:95.5px;height:35px;background:#292929;border:1.5px solid #1e1e1e;border-top:2px solid #0d0d0d;border-radius:6px;box-sizing:border-box;overflow:hidden"></div><span id="t58" class="t" style="left:1795.20px;top:1227.00px;font-size:24px;color:#2ba892;">1</span><div style="left:1750.5px;top:1310px;width:115px;height:43px;background:#414141;border:1.5px solid #232323;border-radius:0 0 6px 6px;box-sizing:border-box"></div><div style="left:764px;top:1262.5px;width:1122px;height:53px;background:#414141;border:2px solid #1c1c1c;border-radius:6px;box-sizing:border-box"></div><div style="left:1752px;top:1313px;width:112px;height:3px;background:#414141;"></div><svg style="left:776px;top:1284px;" width="21" height="9"><g transform="translate(0.000,0.000)"><rect x="0" y="0.9" width="20" height="1.7" fill="#727272"/><rect x="0" y="6.1" width="20" height="1.7" fill="#727272"/></g></svg><span id="t59" class="t" style="left:823.64px;top:1277.00px;font-size:24px;color:#2ba892;letter-spacing:0.390px;">Element 0</span><div style="left:1228px;top:1270px;width:642.5px;height:36px;background:#292929;border:1.5px solid #6a6a6a;border-top:1.5px solid #6a6a6a;border-radius:6px;box-sizing:border-box;overflow:hidden"><div style="right:0;top:0;width:36px;height:36px;background:#373737"></div></div><svg style="left:1841px;top:1277px;" width="23" height="23"><g transform="translate(0.100,0.000)"><circle cx="11" cy="11" r="9" fill="none" stroke="#c8c8c8" stroke-width="2"/><circle cx="11" cy="11" r="3.2" fill="#c8c8c8"/></g></svg><svg style="left:1237px;top:1278px;" width="19" height="22"><g transform="translate(0.000,0.600)"><path d="M0.5 1 H12.5 L17.5 6 V20 H0.5 Z" fill="#2ec4a8"/><g stroke="#0f5a3c" stroke-width="1.7" fill="none"><path d="M7.2 4.2 L5.6 17.8 M12.4 4.2 L10.8 17.8 M3.3 8.6 H15 M2.8 13.6 H14.5"/></g></g></svg><div class="c" style="left:1261px;top:1274.00px;width:572px;height:34px"><span id="t60" class="t" style="left:-0.29px;top:4px;font-size:24px;color:#2ba892;letter-spacing:0.448px;">YourCustom_NonMedia (Dynamic AD Format Handler)</span></div><svg style="left:1773px;top:1322px;" width="21" height="21"><g transform="translate(0.000,0.000)"><path d="M8.2 0 H11.8 V8.2 H20 V11.8 H11.8 V20 H8.2 V11.8 H0 V8.2 H8.2 Z" fill="#2ba892"/></g></svg><div style="left:1825px;top:1330.2px;width:16px;height:3.6px;background:#2ba892;"></div><svg style="left:830px;top:1319px;" width="789" height="9"><g transform="translate(0.000,0.000)"><path d="M0 1.5 L788 1 V6.5 L0 7.0 Z" fill="#f6f600"/></g></svg></div></body></html>
